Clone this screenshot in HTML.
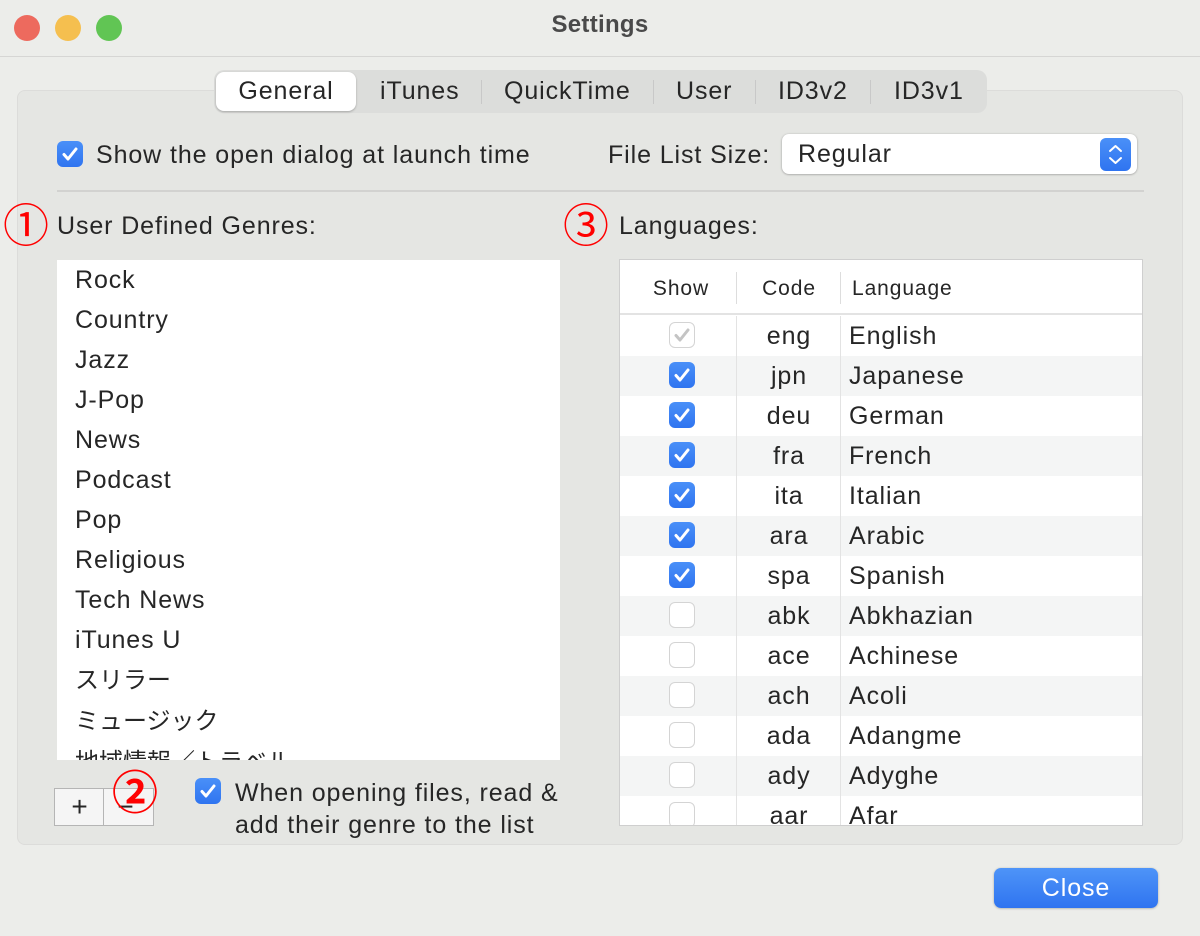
<!DOCTYPE html>
<html><head><meta charset="utf-8"><style>
*{box-sizing:border-box;margin:0;padding:0}
body{width:1200px;height:936px;background:#ecedea;font-family:"Liberation Sans","Noto Sans CJK JP",sans-serif;color:#262626;position:relative;overflow:hidden;font-size:25px;letter-spacing:0.9px}
.abs{position:absolute}
.tl{width:26px;height:26px;border-radius:50%;top:15px}
.cb{position:absolute;width:26px;height:26px;border-radius:6px;background:#3b82f6;background:linear-gradient(#4a90f8,#2f74f0)}
.cb svg{position:absolute;left:4px;top:4px}
.ub{position:absolute;width:26px;height:26px;border-radius:6px;background:#fff;border:1px solid #d4d4d4}
.red{color:#f00;font-size:46px;line-height:46px;font-family:"Noto Sans CJK JP",sans-serif;letter-spacing:0}
.row{position:absolute;left:0;width:522px;height:40px}
.row.alt{background:#f4f5f5}
.jp{letter-spacing:0;font-size:24px}
</style></head><body>
<div class="abs tl" style="left:14px;background:#ed6a5e"></div>
<div class="abs tl" style="left:55px;background:#f5bf4f"></div>
<div class="abs tl" style="left:96px;background:#61c554"></div>
<div class="abs" style="left:0;width:1200px;top:11px;text-align:center;font-weight:bold;font-size:24px;color:#4a4a4a;letter-spacing:0.3px">Settings</div>
<div class="abs" style="left:0;top:56px;width:1200px;height:1px;background:#d6d6d4"></div>
<div class="abs" style="left:17px;top:90px;width:1166px;height:755px;background:#e5e6e3;border:1px solid #dcdcda;border-radius:8px"></div>
<div class="abs" style="left:214px;top:70px;width:773px;height:43px;background:#dcdddb;border-radius:10px"></div>
<div class="abs" style="left:216px;top:72px;width:140px;height:39px;background:#fff;border-radius:8px;box-shadow:0 1px 2px rgba(0,0,0,.25)"></div>
<div class="abs" style="top:77px;left:216px;width:140px;text-align:center">General</div>
<div class="abs" style="top:77px;left:380px">iTunes</div>
<div class="abs" style="top:80px;left:481px;width:1px;height:24px;background:#c8c8c8"></div>
<div class="abs" style="top:77px;left:504px">QuickTime</div>
<div class="abs" style="top:80px;left:653px;width:1px;height:24px;background:#c8c8c8"></div>
<div class="abs" style="top:77px;left:676px">User</div>
<div class="abs" style="top:80px;left:755px;width:1px;height:24px;background:#c8c8c8"></div>
<div class="abs" style="top:77px;left:778px">ID3v2</div>
<div class="abs" style="top:80px;left:870px;width:1px;height:24px;background:#c8c8c8"></div>
<div class="abs" style="top:77px;left:894px">ID3v1</div>

<div class="cb" style="left:57px;top:141px"><svg width="18" height="18"><path d="M3 9.5l4 4.5L15 4" stroke="#fff" stroke-width="3" fill="none" stroke-linecap="round" stroke-linejoin="round"/></svg></div>
<div class="abs" style="left:96px;top:141px">Show the open dialog at launch time</div>
<div class="abs" style="left:608px;top:141px">File List Size:</div>
<div class="abs" style="left:782px;top:134px;width:355px;height:40px;background:#fff;border-radius:7px;box-shadow:0 0.5px 2px rgba(0,0,0,.35)"></div>
<div class="abs" style="left:798px;top:140px">Regular</div>
<div class="abs" style="left:1100px;top:138px;width:31px;height:33px;border-radius:6px;background:linear-gradient(#4a90f8,#2f74f0)"><svg width="31" height="33"><path d="M10 13l5.5-5 5.5 5M10 20l5.5 5 5.5-5" stroke="#fff" stroke-width="2" fill="none" stroke-linecap="round" stroke-linejoin="round"/></svg></div>
<div class="abs" style="left:57px;top:190px;width:1087px;height:2px;background:#d2d2d0"></div>

<div class="abs red" style="left:3px;top:200px">①</div>
<div class="abs" style="left:57px;top:212px">User Defined Genres:</div>
<div class="abs red" style="left:563px;top:200px">③</div>
<div class="abs" style="left:619px;top:212px">Languages:</div>

<div class="abs" style="left:57px;top:260px;width:503px;height:500px;background:#fff;overflow:hidden">
<div style="padding-left:18px;line-height:40px;margin-top:0px">Rock<br>Country<br>Jazz<br>J-Pop<br>News<br>Podcast<br>Pop<br>Religious<br>Tech News<br>iTunes U<br><span class="jp">スリラー</span><br><span class="jp">ミュージック</span><br><span class="jp">地域情報／トラベル</span></div>
</div>
<div class="abs" style="left:54px;top:788px;width:100px;height:38px;background:#f5f5f5;border:1px solid #b5b5b5"></div>
<div class="abs" style="left:103px;top:789px;width:1px;height:36px;background:#b5b5b5"></div>
<div class="abs" style="left:66px;top:791px;width:28px;text-align:center;font-size:28px">+</div>
<div class="abs" style="left:112px;top:791px;width:28px;text-align:center;font-size:28px">−</div>
<div class="abs red" style="left:112px;top:767px;font-weight:bold">②</div>
<div class="cb" style="left:195px;top:778px"><svg width="18" height="18"><path d="M3 9.5l4 4.5L15 4" stroke="#fff" stroke-width="3" fill="none" stroke-linecap="round" stroke-linejoin="round"/></svg></div>
<div class="abs" style="left:235px;top:777px;line-height:32px">When opening files, read &amp;<br>add their genre to the list</div>

<div class="abs" style="left:619px;top:259px;width:524px;height:567px;background:#fff;border:1px solid #cfcfcf;overflow:hidden">
<div class="abs" style="left:0;top:0;width:522px;height:55px;border-bottom:2px solid #e3e3e3;font-size:21px">
<div class="abs" style="left:0;width:122px;top:17px;text-align:center">Show</div>
<div class="abs" style="left:116px;top:12px;width:1px;height:32px;background:#ddd"></div>
<div class="abs" style="left:117px;width:104px;top:17px;text-align:center">Code</div>
<div class="abs" style="left:220px;top:12px;width:1px;height:32px;background:#ddd"></div>
<div class="abs" style="left:232px;top:17px">Language</div>
</div>
<div class="abs" style="left:0;top:56px;width:522px;height:520px">
<div class="row" style="top:0"></div><div class="row alt" style="top:40px"></div><div class="row" style="top:80px"></div><div class="row alt" style="top:120px"></div><div class="row" style="top:160px"></div><div class="row alt" style="top:200px"></div><div class="row" style="top:240px"></div><div class="row alt" style="top:280px"></div><div class="row" style="top:320px"></div><div class="row alt" style="top:360px"></div><div class="row" style="top:400px"></div><div class="row alt" style="top:440px"></div><div class="row" style="top:480px"></div>
<div class="abs" style="left:116px;top:0;width:1px;height:520px;background:#e3e3e3"></div>
<div class="abs" style="left:220px;top:0;width:1px;height:520px;background:#e3e3e3"></div>
<div class="ub" style="left:49px;top:6px"><svg width="26" height="26" style="position:absolute;left:3px;top:3px"><path d="M3 9.5l4 4.5L15 4" stroke="#c4c4c4" stroke-width="3" fill="none" stroke-linecap="round" stroke-linejoin="round"/></svg></div>
<div class="cb" style="left:49px;top:46px"><svg width="18" height="18"><path d="M3 9.5l4 4.5L15 4" stroke="#fff" stroke-width="3" fill="none" stroke-linecap="round" stroke-linejoin="round"/></svg></div>
<div class="cb" style="left:49px;top:86px"><svg width="18" height="18"><path d="M3 9.5l4 4.5L15 4" stroke="#fff" stroke-width="3" fill="none" stroke-linecap="round" stroke-linejoin="round"/></svg></div>
<div class="cb" style="left:49px;top:126px"><svg width="18" height="18"><path d="M3 9.5l4 4.5L15 4" stroke="#fff" stroke-width="3" fill="none" stroke-linecap="round" stroke-linejoin="round"/></svg></div>
<div class="cb" style="left:49px;top:166px"><svg width="18" height="18"><path d="M3 9.5l4 4.5L15 4" stroke="#fff" stroke-width="3" fill="none" stroke-linecap="round" stroke-linejoin="round"/></svg></div>
<div class="cb" style="left:49px;top:206px"><svg width="18" height="18"><path d="M3 9.5l4 4.5L15 4" stroke="#fff" stroke-width="3" fill="none" stroke-linecap="round" stroke-linejoin="round"/></svg></div>
<div class="cb" style="left:49px;top:246px"><svg width="18" height="18"><path d="M3 9.5l4 4.5L15 4" stroke="#fff" stroke-width="3" fill="none" stroke-linecap="round" stroke-linejoin="round"/></svg></div>
<div class="ub" style="left:49px;top:286px"></div><div class="ub" style="left:49px;top:326px"></div><div class="ub" style="left:49px;top:366px"></div><div class="ub" style="left:49px;top:406px"></div><div class="ub" style="left:49px;top:446px"></div><div class="ub" style="left:49px;top:486px"></div>
<div class="abs" style="left:117px;width:104px;top:0;text-align:center;line-height:40px">eng<br>jpn<br>deu<br>fra<br>ita<br>ara<br>spa<br>abk<br>ace<br>ach<br>ada<br>ady<br>aar</div>
<div class="abs" style="left:229px;top:0;line-height:40px">English<br>Japanese<br>German<br>French<br>Italian<br>Arabic<br>Spanish<br>Abkhazian<br>Achinese<br>Acoli<br>Adangme<br>Adyghe<br>Afar</div>
</div>
</div>

<div class="abs" style="left:994px;top:868px;width:164px;height:40px;border-radius:7px;background:linear-gradient(#4e94f8,#2f74f0);color:#fff;text-align:center;line-height:40px;box-shadow:0 0.5px 2px rgba(0,0,0,.3)">Close</div>
</body></html>
